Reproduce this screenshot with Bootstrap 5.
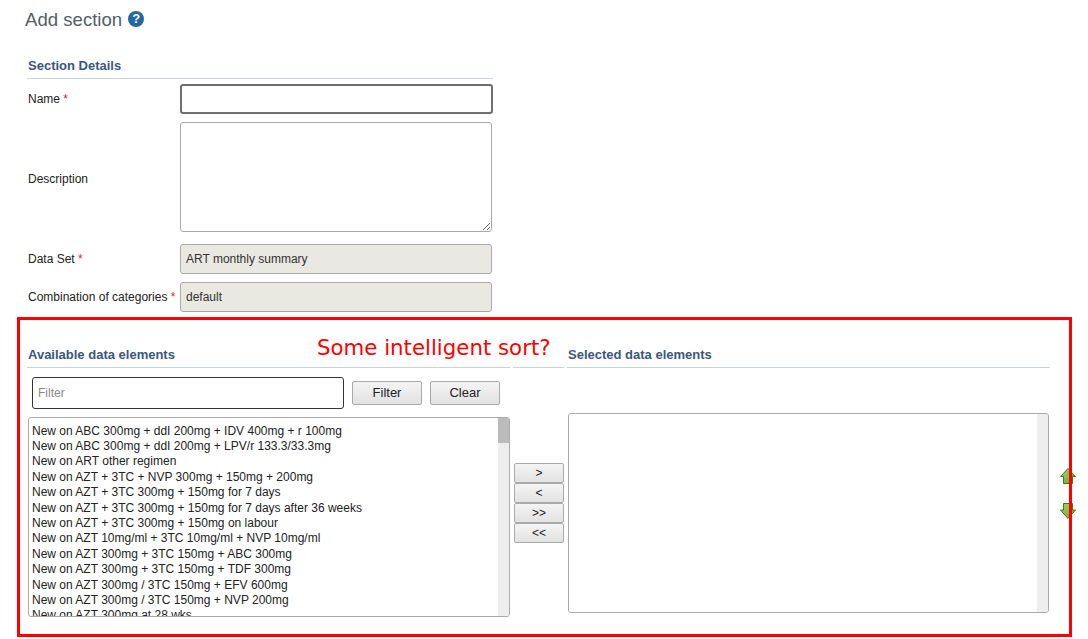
<!DOCTYPE html>
<html lang="en">
<head>
<meta charset="utf-8">
<title>Add section</title>
<link href="https://cdn.jsdelivr.net/npm/bootstrap@5.3.0/dist/css/bootstrap.min.css" rel="stylesheet">
<style>
html,body{height:639px;overflow:hidden}
body{font-family:"Liberation Sans",Arial,sans-serif;font-size:12px;color:#222;background:#fff;position:relative}
.page-title{font-size:18.6px;line-height:22px;font-weight:400;color:#555e66;margin:0;padding:9px 0 0 25px;height:31px}
.help-dot{width:16px;height:16px;border-radius:50%;background:#24699d;color:#fff;font-size:13px;font-weight:700;line-height:16px;margin-left:6px;position:relative;top:-1px}
.details{width:466px;margin:24px 0 0 27px}
.sect-head{font-size:13px;font-weight:700;color:#3a5680;line-height:15px;padding:0 1px 5px;border-bottom:1px solid #c5d3e2}
.sect-head-top{padding-top:3px}
.form-line{display:flex;align-items:center;padding-left:1px}
.form-line label{width:152px;flex:none;margin:0;line-height:14px;white-space:nowrap}
.line-name{margin-top:5px}
.line-desc{margin-top:8px}
.line-desc label{padding-top:4px}
.line-set{margin-top:12px}
.line-combo{margin-top:8px}
.req{color:#e8202a}
.fld{width:312px;flex:none;height:30px;font-size:12px;color:#333;padding:0 5px;border:1px solid #aaa;border-radius:3px;line-height:28px;box-shadow:none;background:#fff}
.fld:focus{box-shadow:none;border-color:#6f6f6f}
.fld-name{width:313px;border:2px solid #6f6f6f}
.fld-desc{height:110px;min-height:0;resize:vertical}
.fld-ro{background:#e9e8e1}
.picker{display:grid;grid-template-columns:483px 51px 483px 30px;column-gap:3px;margin:35px 0 0 27px;width:1060px}
.picker .sect-head{height:21px;padding:0 1px;line-height:15px}
.left-tools{display:flex;align-items:center;padding:9px 0 8px 5px}
.filter-input{width:312px;height:32px;border:1px solid #333;border-radius:3px;font-size:12px;padding:0 5px;box-shadow:none}
.filter-input::placeholder{color:#888}
.grey-btn{width:70px;flex:none;height:24px;padding:0;font-size:13px;color:#222;background:linear-gradient(#f4f4f4,#e2e2e2);border:1px solid #aaa;border-radius:2px;margin-left:8px;line-height:22px}
.grey-btn:hover{color:#222;background:#e8e8e8;border-color:#aaa}
.list-frame{display:flex;width:482px;height:200px;margin-left:1px;border:1px solid #aaa;border-radius:3px;overflow:hidden;background:#fff}
.list-frame-right{width:481px;margin-top:45px}
.pick-list{display:block;flex:1;min-width:0;border:0;padding:5.7px 0 0 3px;font-family:"Liberation Sans",Arial,sans-serif;font-size:12px;color:#222;overflow:hidden;outline:0;background:#fff}
.pick-list option{padding:0;min-height:15.4px;line-height:15.4px}
.track{flex:none;width:11px;background:#eee}
.thumb{height:25px;background:#bbb}
.mid-col{padding-top:95px;padding-left:1px}
.move-btn{display:block;width:50px;height:20px;padding:0;font-size:12px;line-height:17px;color:#222;background:linear-gradient(#f4f4f4,#e2e2e2);border:1px solid #aaa;border-radius:2px}
.move-btn:hover{color:#222;background:#e8e8e8;border-color:#aaa}
.order-col{padding:121px 0 0 10px;margin-left:-3px}
.order-col svg{display:block;width:16px;height:16px;margin-bottom:19px}
.red-frame{position:absolute;left:17px;top:317px;width:1055px;height:320px;border:3px solid #f00;pointer-events:none}
.red-note{position:absolute;left:317px;top:334px;font-family:"DejaVu Sans",sans-serif;font-size:21.3px;line-height:28px;color:#f00;white-space:nowrap}
</style>
</head>
<body>
<h1 class="page-title d-flex align-items-center">Add section <span class="help-dot d-inline-flex justify-content-center">?</span></h1>

<section class="details">
  <div class="sect-head sect-head-top">Section Details</div>
  <div class="form-line line-name"><label for="fName">Name <span class="req">*</span></label><input id="fName" class="form-control fld fld-name" type="text"></div>
  <div class="form-line line-desc"><label for="fDesc">Description</label><textarea id="fDesc" class="form-control fld fld-desc"></textarea></div>
  <div class="form-line line-set"><label>Data Set <span class="req">*</span></label><div class="fld fld-ro">ART monthly summary</div></div>
  <div class="form-line line-combo"><label>Combination of categories <span class="req">*</span></label><div class="fld fld-ro">default</div></div>
</section>

<section class="picker">
  <div class="left-col">
    <div class="sect-head">Available data elements</div>
    <div class="left-tools">
      <input class="form-control filter-input" type="text" placeholder="Filter">
      <button type="button" class="btn grey-btn">Filter</button>
      <button type="button" class="btn grey-btn">Clear</button>
    </div>
    <div class="list-frame">
      <select class="pick-list" multiple>
        <option>New on ABC 300mg + ddI 200mg + IDV 400mg + r 100mg</option>
        <option>New on ABC 300mg + ddI 200mg + LPV/r 133.3/33.3mg</option>
        <option>New on ART other regimen</option>
        <option>New on AZT + 3TC + NVP 300mg + 150mg + 200mg</option>
        <option>New on AZT + 3TC 300mg + 150mg for 7 days</option>
        <option>New on AZT + 3TC 300mg + 150mg for 7 days after 36 weeks</option>
        <option>New on AZT + 3TC 300mg + 150mg on labour</option>
        <option>New on AZT 10mg/ml + 3TC 10mg/ml + NVP 10mg/ml</option>
        <option>New on AZT 300mg + 3TC 150mg + ABC 300mg</option>
        <option>New on AZT 300mg + 3TC 150mg + TDF 300mg</option>
        <option>New on AZT 300mg / 3TC 150mg + EFV 600mg</option>
        <option>New on AZT 300mg / 3TC 150mg + NVP 200mg</option>
        <option>New on AZT 300mg at 28 wks</option>
      </select>
      <div class="track"><div class="thumb"></div></div>
    </div>
  </div>
  <div class="mid-col-wrap">
    <div class="sect-head"></div>
    <div class="mid-col">
      <button type="button" class="btn move-btn">&gt;</button>
      <button type="button" class="btn move-btn">&lt;</button>
      <button type="button" class="btn move-btn">&gt;&gt;</button>
      <button type="button" class="btn move-btn">&lt;&lt;</button>
    </div>
  </div>
  <div class="right-col">
    <div class="sect-head">Selected data elements</div>
    <div class="list-frame list-frame-right">
      <select class="pick-list" multiple></select>
      <div class="track"></div>
    </div>
  </div>
  <div class="order-col">
    <svg viewBox="0 0 16 16" role="img" aria-label="Move up"><defs><linearGradient id="gUp" x1="0" y1="0" x2="1" y2="1"><stop offset="0" stop-color="#a9d67c"/><stop offset="1" stop-color="#5fa21f"/></linearGradient></defs><path d="M8 .5 15.500 8.500H12.500V15.500H3.500V8.500H.5Z" fill="url(#gUp)" stroke="#3f7a10"/></svg>
    <svg viewBox="0 0 16 16" role="img" aria-label="Move down"><path d="M3.500.5H12.500V7H15.500L8 15.500.5 7H3.500Z" fill="url(#gUp)" stroke="#3f7a10"/></svg>
  </div>
</section>

<div class="red-frame"></div>
<div class="red-note">Some intelligent sort?</div>

<script src="https://cdn.jsdelivr.net/npm/bootstrap@5.3.0/dist/js/bootstrap.bundle.min.js"></script>
<script>
document.getElementById('fName').focus();
</script>
</body>
</html>
